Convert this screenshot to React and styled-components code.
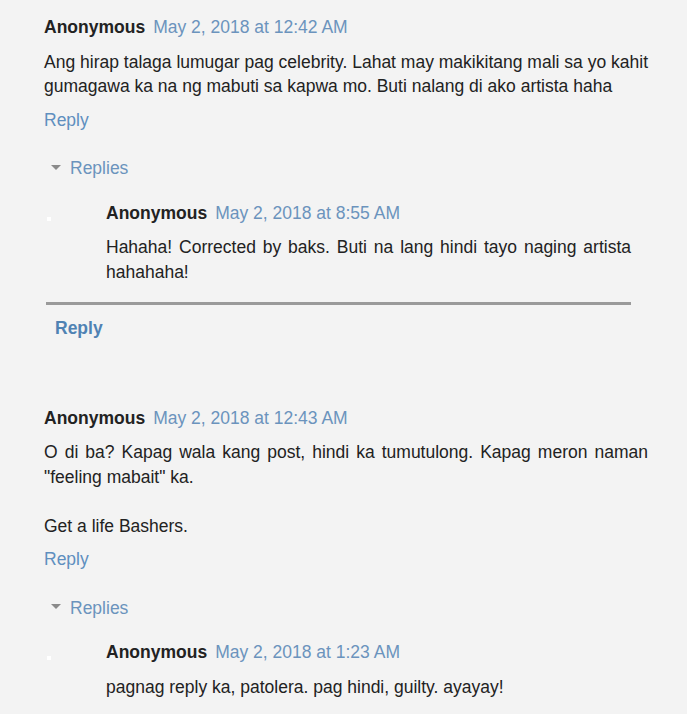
import React from 'react';
import styled, { createGlobalStyle } from 'styled-components';

const GlobalStyle = createGlobalStyle`
  html, body {
    margin: 0;
    padding: 0;
    background: #f3f3f3;
  }
  body {
    font-family: "Liberation Sans", Arial, sans-serif;
    font-size: 17.5px;
    color: #222;
  }
`;

const Page = styled.div`
  padding: 15px 39px 20px 44px;
  line-height: 24.5px;
`;

const Thread = styled.div`
  & + & {
    margin-top: 65px;
  }
`;

const Header = styled.div`
  display: flex;
  align-items: baseline;
  gap: 8px;
  white-space: nowrap;
`;

const Author = styled.span`
  font-weight: bold;
  color: #222;
`;

const Date = styled.a`
  color: #6b93bd;
  text-decoration: none;
`;

const Body = styled.div`
  margin-top: 10px;
  text-align: justify;
`;

const ReplyLink = styled.a`
  display: block;
  margin-top: 9px;
  color: #5f8fbf;
  text-decoration: none;
`;

const RepliesToggle = styled.div`
  display: flex;
  align-items: center;
  margin-top: 24px;
  padding-left: 7px;
  color: #6b93bd;
`;

const Caret = styled.span`
  width: 0;
  height: 0;
  border-left: 5px solid transparent;
  border-right: 5px solid transparent;
  border-top: 5px solid #8a8a8a;
  margin-right: 9px;
  margin-top: -2px;
`;

const ReplyList = styled.div`
  position: relative;
  margin: 20px 17px 0 62px;
`;

const Avatar = styled.span`
  position: absolute;
  left: -59px;
  top: 16px;
  width: 4px;
  height: 4px;
  background: #fff;
`;

const Divider = styled.hr`
  margin: 18px 17px 0 2px;
  border: none;
  height: 3px;
  background: #9a9a9a;
`;

const BoldReply = styled.a`
  display: block;
  margin: 11px 0 0 11px;
  font-weight: bold;
  color: #4f82b3;
  text-decoration: none;
`;

const threads = [
  {
    date: 'May 2, 2018 at 12:42 AM',
    body: ['Ang hirap talaga lumugar pag celebrity. Lahat may makikitang mali sa yo kahit gumagawa ka na ng mabuti sa kapwa mo. Buti nalang di ako artista haha'],
    reply: {
      date: 'May 2, 2018 at 8:55 AM',
      body: 'Hahaha! Corrected by baks. Buti na lang hindi tayo naging artista hahahaha!',
    },
  },
  {
    date: 'May 2, 2018 at 12:43 AM',
    body: [
      'O di ba? Kapag wala kang post, hindi ka tumutulong. Kapag meron naman "feeling mabait" ka.',
      'Get a life Bashers.',
    ],
    reply: {
      date: 'May 2, 2018 at 1:23 AM',
      body: 'pagnag reply ka, patolera. pag hindi, guilty. ayayay!',
    },
  },
];

const App = () => (
  <>
    <GlobalStyle />
    <Page>
      {threads.map((t) => (
        <Thread key={t.date}>
          <Header>
            <Author>Anonymous</Author>
            <Date>{t.date}</Date>
          </Header>
          <Body>
            {t.body.map((p, i) => (
              <React.Fragment key={i}>
                {i > 0 && (
                  <>
                    <br />
                    <br />
                  </>
                )}
                {p}
              </React.Fragment>
            ))}
          </Body>
          <ReplyLink>Reply</ReplyLink>
          <RepliesToggle>
            <Caret />
            Replies
          </RepliesToggle>
          <ReplyList>
            <Avatar />
            <Header>
              <Author>Anonymous</Author>
              <Date>{t.reply.date}</Date>
            </Header>
            <Body>{t.reply.body}</Body>
          </ReplyList>
          <Divider />
          <BoldReply>Reply</BoldReply>
        </Thread>
      ))}
    </Page>
  </>
);

export default App;
